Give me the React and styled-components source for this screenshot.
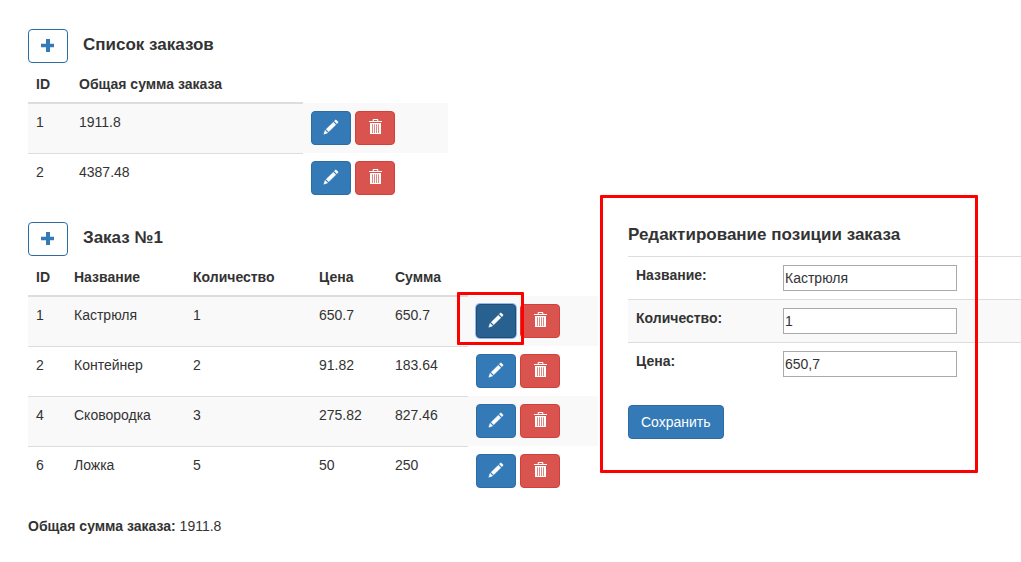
import React from "react";
import styled, { createGlobalStyle, css } from "styled-components";

const GlobalStyle = createGlobalStyle`
  *, *::before, *::after { box-sizing: border-box; }
  body {
    margin: 0;
    background: #fff;
    color: #333;
    font: 14px/20px "Liberation Sans", Arial, sans-serif;
  }
`;

const Page = styled.main`
  display: flex;
  align-items: flex-start;
  gap: 30px;
  padding: 29px 0 26px 28px;
  overflow-x: hidden;
`;

const Orders = styled.div`
  flex: 0 0 570px;
  display: flex;
  flex-direction: column;
  gap: 19px;
`;

const SectionHeader = styled.header`
  display: flex;
  align-items: flex-start;
  gap: 15px;
  height: 37px;
`;

const Title = styled.h4`
  margin: 0;
  padding-top: 6px;
  font-size: 17px;
  line-height: 20px;
  font-weight: bold;
`;

const Table = styled.table`
  width: ${(p) => p.$width || "100%"};
  table-layout: fixed;
  border-collapse: collapse;
`;

const HeadCell = styled.th`
  width: ${(p) => p.$width};
  padding: 8px;
  border-bottom: ${(p) => (p.$plain ? "0" : "2px solid #ddd")};
  text-align: left;
  white-space: nowrap;
`;

const Row = styled.tr`
  &:nth-child(${(p) => p.$stripe || "odd"}) { background: #f9f9f9; }
`;

const Cell = styled.td`
  padding: 8px;
  border-top: 1px solid #ddd;
  vertical-align: top;
`;

const ActionCell = styled.td`
  padding: 8px;
  vertical-align: top;
`;

const Actions = styled.div`
  position: relative;
  display: flex;
  gap: 4px;
`;

const variants = {
  primary: css`background: #337ab7; border-color: #2e6da4; color: #fff;`,
  danger: css`background: #d9534f; border-color: #d43f3a; color: #fff;`,
  outline: css`background: #fff; border-color: #2e6da4; color: #337ab7;`,
  active: css`
    background: #286090;
    border-color: #204d74;
    color: #fff;
    box-shadow: 0 0 0 1px #8fb8f5;
  `,
};

const Button = styled.button`
  flex: none;
  height: 34px;
  padding: 6px 12px;
  border: 1px solid;
  border-radius: 4px;
  font: inherit;
  cursor: pointer;
  ${(p) => variants[p.$variant]}
`;

const IconButton = styled(Button)`
  display: flex;
  padding: 8px 12px;
`;

const Glyph = styled.svg`
  display: block;
  width: 14px;
  height: 14px;
  overflow: visible;
  fill: currentColor;
`;

const Frame = styled.span`
  position: absolute;
  border: 3px solid #f00;
  border-radius: 1px;
  pointer-events: none;
`;

const ButtonFrame = styled(Frame)`
  top: -12px;
  left: -19px;
  width: 67px;
  height: 53px;
`;

const PanelFrame = styled(Frame)`
  top: -30px;
  left: -28px;
  width: 378px;
  height: 278px;
`;

const Total = styled.p`
  margin: 20px 0 0;
`;

const Editor = styled.form`
  position: relative;
  flex: 1 0 393px;
  margin-top: 196px;
`;

const EditorTitle = styled(Title)`
  padding: 0 0 11px;
`;

const FieldHead = styled.th`
  width: 147px;
  padding: 8px;
  border-top: 1px solid #ddd;
  text-align: left;
  vertical-align: top;
`;

const Input = styled.input`
  display: block;
  width: 174px;
  height: 26px;
  padding: 1px;
  border: 1px solid #a9a9a9;
  border-radius: 0;
  background: #fff;
  color: #333;
  font: inherit;
`;

const SaveButton = styled(Button)`
  margin-top: 20px;
`;

const icons = {
  plus: (
    <path d="M5 1h4v4.700h4v3.600H9V14H5V9.300H0V5.700h5z" />
  ),
  pencil: (
    <g transform="translate(0 14) scale(.0117 -.0117)" stroke="currentColor" strokeWidth="36">
      <path d="M1011 1210q19 0 33 -13l153 -153q13 -14 13 -33t-13 -33l-99 -92l-214 214l95 96q13 14 32 14zM1013 800l-615 -614l-214 214l614 614zM317 96l-333 -112l110 335z" />
    </g>
  ),
  trash: (
    <path
      transform="translate(0 -1)"
      fillRule="evenodd"
      d="M4.7 2V.8Q4.7 0 5.5 0h4Q10.300 0 10.300 .8V2H14v1H1V2zM5.800 2h3.400V1h-3.400zM2 4h11v11H2zM4.200 5.200v8.800h.7V5.200zM6.200 5.200v8.800h.7V5.200zM8.200 5.200v8.800h.7V5.200zM10.200 5.200v8.800h.7V5.200z"
    />
  ),
};

function Icon({ name }) {
  return (
    <Glyph viewBox="0 0 14 14" aria-hidden="true">{icons[name]}</Glyph>
  );
}

function RowActions({ active }) {
  return (
    <ActionCell>
      <Actions>
        <IconButton type="button" $variant={active ? "active" : "primary"} aria-label="Редактировать">
          <Icon name="pencil" />
        </IconButton>
        <IconButton type="button" $variant="danger" aria-label="Удалить">
          <Icon name="trash" />
        </IconButton>
        {active && <ButtonFrame />}
      </Actions>
    </ActionCell>
  );
}

function DataTable({ columns, rows, width, activeId }) {
  return (
    <Table $width={width}>
      <thead>
        <tr>
          {columns.map((c) => (
            <HeadCell key={c.label} $width={c.width} scope="col">{c.label}</HeadCell>
          ))}
          <HeadCell as="td" $plain />
        </tr>
      </thead>
      <tbody>
        {rows.map((row) => (
          <Row key={row[0]}>
            {row.map((value, i) => <Cell key={i}>{value}</Cell>)}
            <RowActions active={row[0] === activeId} />
          </Row>
        ))}
      </tbody>
    </Table>
  );
}

function Section({ title, children }) {
  return (
    <section>
      <SectionHeader>
        <IconButton type="button" $variant="outline" aria-label="Добавить">
          <Icon name="plus" />
        </IconButton>
        <Title>{title}</Title>
      </SectionHeader>
      {children}
    </section>
  );
}

const orderColumns = [
  { label: "ID", width: "43px" },
  { label: "Общая сумма заказа", width: "232px" },
];
const orders = [[1, "1911.8"], [2, "4387.48"]];

const itemColumns = [
  { label: "ID", width: "38px" },
  { label: "Название", width: "119px" },
  { label: "Количество", width: "126px" },
  { label: "Цена", width: "76px" },
  { label: "Сумма", width: "81px" },
];
const items = [
  [1, "Кастрюля", 1, "650.7", "650.7"],
  [2, "Контейнер", 2, "91.82", "183.64"],
  [4, "Сковородка", 3, "275.82", "827.46"],
  [6, "Ложка", 5, "50", "250"],
];

const fields = [
  { id: "name", label: "Название:", value: "Кастрюля" },
  { id: "quantity", label: "Количество:", value: "1" },
  { id: "price", label: "Цена:", value: "650,7" },
];

export default function App() {
  return (
    <>
      <GlobalStyle />
      <Page>
        <Orders>
          <Section title="Список заказов">
            <DataTable columns={orderColumns} rows={orders} width="420px" />
          </Section>
          <Section title="Заказ №1">
            <DataTable columns={itemColumns} rows={items} activeId={1} />
            <Total><b>Общая сумма заказа:</b> 1911.8</Total>
          </Section>
        </Orders>
        <Editor onSubmit={(e) => e.preventDefault()}>
          <EditorTitle>Редактирование позиции заказа</EditorTitle>
          <Table>
            <tbody>
              {fields.map((f) => (
                <Row key={f.id} $stripe="even">
                  <FieldHead scope="row"><label htmlFor={f.id}>{f.label}</label></FieldHead>
                  <Cell><Input id={f.id} defaultValue={f.value} /></Cell>
                </Row>
              ))}
            </tbody>
          </Table>
          <SaveButton type="submit" $variant="primary">Сохранить</SaveButton>
          <PanelFrame />
        </Editor>
      </Page>
    </>
  );
}
